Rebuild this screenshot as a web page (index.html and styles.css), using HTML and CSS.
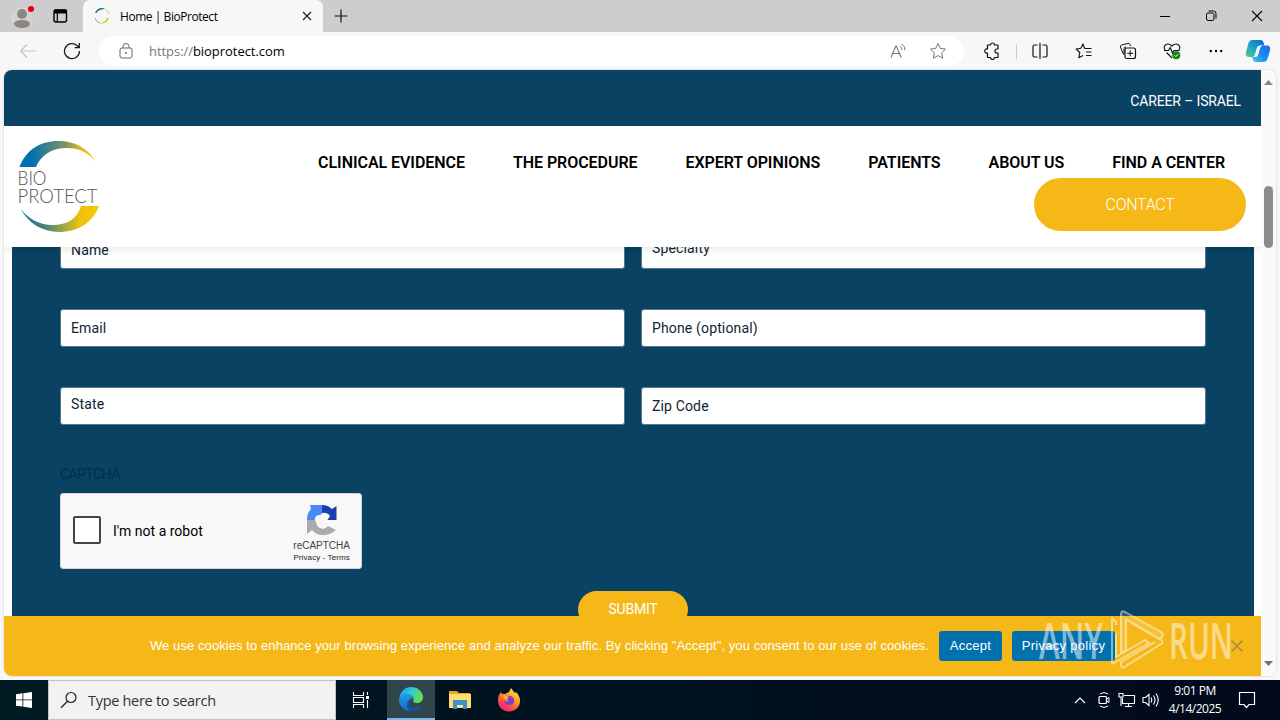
FILE: index.html
```
<!DOCTYPE html>
<html lang="en">
  <head>
    <meta charset="UTF-8" />
    <meta name="viewport" content="width=device-width, initial-scale=1.0" />
    <title>Home | BioProtect</title>
    <link rel="stylesheet" href="styles.css">
  </head>
  <body>
    <!-- Browser tabs -->
    <div class="tab-bar">
      <div class="tab-tools">
        <svg width="24" height="30" viewBox="0 0 24 30"><circle cx="12" cy="17" r="11" fill="#d6d3d0"/><circle cx="12" cy="13" r="5" fill="#8b8785"/><path d="M4 23c0-3 4-4 8-4s8 1 8 4c-1 3-4 4-8 4s-7-1-8-4z" fill="#8b8785"/><circle cx="21" cy="8" r="3.1" fill="#e60012"/></svg>
        <svg width="16" height="16" viewBox="0 0 16 16"><rect x="2" y="2" width="12.5" height="12" rx="2" fill="none" stroke="#000" stroke-width="1.4"/><path d="M2 3.5h12.5M3 2v3h11V2zM5.3 5v9" fill="#000" stroke="#000" stroke-width="1.2"/></svg>
      </div>
      <div class="tab">
        <svg width="16" height="16" viewBox="0 0 16 16"><path d="M1 5C3 0 8-1 11 1 7 1 4 2 2.500 5z" fill="#17667e"/><path d="M11 1q3 1.500 4 5" fill="none" stroke="#d8cd6c"/><path d="M1 10q1 4 5 5" fill="none" stroke="#7fae9c"/><path d="M15 10c-2 5-6 6.500-10 5 4 0 7-2 8-5z" fill="#d9c51f"/></svg>
        <span class="tab-title">Home | BioProtect</span>
        <svg width="10" height="10" viewBox="0 0 10 10"><path d="M1 1l8 8M9 1L1 9" stroke="#222" stroke-width="1.2"/></svg>
      </div>
      <svg class="new-tab" width="14" height="14" viewBox="0 0 14 14"><path d="M7 .5v13M.5 7h13" stroke="#111" stroke-width="1.2"/></svg>
      <div class="window-btns">
        <svg width="12" height="12" viewBox="0 0 12 12"><path d="M1 6.500h10" stroke="#000"/></svg>
        <svg width="12" height="12" viewBox="0 0 12 12"><rect x="1.500" y="3" width="7.500" height="7.500" rx="1.500" fill="none" stroke="#000"/><path d="M3.500 1h5q2.500 0 2.500 2.500v5" fill="none" stroke="#000"/></svg>
        <svg width="12" height="12" viewBox="0 0 12 12"><path d="M1 1l10 10M11 1L1 11" stroke="#000" stroke-width="1.100"/></svg>
      </div>
    </div>

    <!-- Address bar -->
    <div class="toolbar">
      <svg class="back" width="18" height="16" viewBox="0 0 18 16"><path d="M17 8H2M8 1.500L1.500 8 8 14.500" fill="none" stroke="#c4c4c4" stroke-width="1.200"/></svg>
      <svg class="reload" width="18" height="18" viewBox="0 0 18 18"><path d="M16.500 9A7.500 7.500 0 1 1 14 3.500L16 5.500M16.300 1v4.700h-4.700" fill="none" stroke="#1b1b1b" stroke-width="1.300"/></svg>
      <div class="address">
        <svg width="14" height="16" viewBox="0 0 14 16"><rect x="1" y="5" width="12" height="10" rx="2" fill="none" stroke="#666"/><path d="M4 5V3.500a3 3 0 0 1 6 0V5" fill="none" stroke="#666"/><circle cx="7" cy="10" r="1" fill="#666"/></svg>
        <span class="url"><span>https://</span>bioprotect.com</span>
        <svg width="17" height="16" viewBox="0 0 17 16"><path d="M1 14.500L5.800 3h.6l4.800 11.500M2.800 10.500h6.600" fill="none" stroke="#777" stroke-width="1.100"/><path d="M10 3q2 1.500 2 4M11.500 .8q3.500 2.200 3.500 6.500" fill="none" stroke="#777"/></svg>
        <svg class="star" width="18" height="18" viewBox="0 0 18 18"><path d="M9 1.500l2.300 4.900 5.200.7-3.800 3.700.9 5.400L9 13.600l-4.600 2.600.9-5.400L1.500 7.100l5.200-.7z" fill="none" stroke="#777" stroke-linejoin="round"/></svg>
      </div>
      <div class="toolbar-icons">
        <svg width="18" height="18" viewBox="0 0 18 18"><path d="M4.500 3h3a2 2 0 0 1 4 0H15v4h-1a2 2 0 0 0 0 4h1v4.500h-3.500a2 2 0 0 1-4 0h-3V11a2.100 2.100 0 1 1 0-4z" fill="none" stroke="#111" stroke-width="1.200" stroke-linejoin="round"/></svg>
        <span class="divider"></span>
        <svg width="18" height="18" viewBox="0 0 18 18"><path d="M6.500 3H3.500Q2 3 2 4.500v9Q2 15 3.500 15h3M11.500 3h3q1.500 0 1.500 1.500v9q0 1.500-1.500 1.500h-3M9 1v16" fill="none" stroke="#111" stroke-width="1.200"/></svg>
        <svg width="18" height="18" viewBox="0 0 18 18"><path d="M9.500 6.200L8 2 5.900 6.300l-4.700.7 3.600 3.500-1 5.200L8 13.500M8.800 4.500L10 6.500h6.500M11 10h5.500M11 13.500h5.500" fill="none" stroke="#111" stroke-width="1.100" stroke-linejoin="round"/></svg>
        <svg width="18" height="18" viewBox="0 0 18 18"><rect x="6" y="6" width="10.500" height="10.500" rx="2" fill="none" stroke="#111" stroke-width="1.200"/><path d="M11.200 8.300v6M8.200 11.300h6M4.500 12.500L1.500 5Q1 3.500 2.500 3l6.500-1.500q1.500-.3 2 1.200l.5 1.500M5 12.500V6.500Q5 5 7 5" fill="none" stroke="#111"/></svg>
        <svg width="18" height="18" viewBox="0 0 18 18"><path d="M2 8C0 5 2 2 5 2c2 0 3 1 4 2.200C10 3 11 2 13 2c3 0 5 3 3 6M3.500 10.500L9 16M1 8.500h4.500L7.200 5.500l2.300 5.500 1.500-2.500h5.500" fill="none" stroke="#111" stroke-width="1.100"/><circle cx="13.300" cy="13.300" r="4" fill="#13851b"/><path d="M11.600 13.300l1.200 1.200 2.300-2.300" fill="none" stroke="#fff"/></svg>
        <svg width="18" height="18" viewBox="0 0 18 18"><circle cx="3.800" cy="9" r="1.200"/><circle cx="9" cy="9" r="1.200"/><circle cx="14.200" cy="9" r="1.200"/></svg>
      </div>
      <svg class="copilot" width="26" height="24" viewBox="0 0 26 24">
        <defs>
          <linearGradient id="cp-a" x1="0" y1="1" x2="1" y2="0"><stop offset="0" stop-color="#56cf7d"/><stop offset=".45" stop-color="#1ca5c9"/><stop offset="1" stop-color="#1261cf"/></linearGradient>
          <linearGradient id="cp-b" x1="0" y1="1" x2="1" y2="0"><stop offset="0" stop-color="#45c8f4"/><stop offset=".5" stop-color="#168af2"/><stop offset="1" stop-color="#2168e0"/></linearGradient>
        </defs>
        <path d="M7.500 1h8q2.500 0 3.200 3l.6 2.500h-2.500q-2.500 0-3.300 3l-2 6.500q-.8 2-3 2H4q-4 0-3-5L3.500 4Q4.500 1 7.500 1z" fill="url(#cp-a)"/>
        <path d="M17.500 6.500H22q4 0 3 5l-2.500 8q-1 3.500-4 3.500H11q-2.500 0-3.200-3L7.200 18h2.300q2.500 0 3.300-3l2.200-6.500q.6-2 2.500-2z" fill="url(#cp-b)"/>
        <path d="M15.500 6.500h-1q-2 0-2.700 2.500L10 15q-.6 2.500-2 3h2.500q2 0 2.700-2.500L15 9.500q.5-2.500 2.500-3z" fill="#f6f6f6"/>
      </svg>
    </div>

    <div class="browser-view">
      <div class="page">
        <div class="top-bar"><a>CAREER – ISRAEL</a></div>

        <header class="site-header">
          <svg class="logo" width="84" height="94" viewBox="0 0 84 94">
            <defs>
              <linearGradient id="arc-top"><stop offset=".15" stop-color="#006fb2"/><stop offset=".6" stop-color="#7d9660"/><stop offset=".8" stop-color="#d5bd20"/><stop offset="1" stop-color="#f0cd20"/></linearGradient>
              <linearGradient id="arc-bottom"><stop offset="0" stop-color="#1874a0"/><stop offset=".3" stop-color="#49807a"/><stop offset=".55" stop-color="#9baa42"/><stop offset=".75" stop-color="#ecc010"/><stop offset="1" stop-color="#ffc800"/></linearGradient>
            </defs>
            <path d="M3.500 28C10 11 24 2 42 2c17 0 30 7 38 21C72 13 62 9 51 9 36 9 25 16 20 28z" fill="url(#arc-top)"/>
            <path d="M4 69c8 11 20 17 33 17 14 0 24-6 28-19h18C77 84 61 93 43 93 26 93 12 84 4 69z" fill="url(#arc-bottom)"/>
            <text x="1.500" y="45.500" textLength="29" lengthAdjust="spacingAndGlyphs">BIO</text>
            <text x="1.500" y="63.500" textLength="80" lengthAdjust="spacingAndGlyphs">PROTECT</text>
          </svg>
          <nav class="main-nav">
            <a>CLINICAL EVIDENCE</a>
            <a>THE PROCEDURE</a>
            <a>EXPERT OPINIONS</a>
            <a>PATIENTS</a>
            <a>ABOUT US</a>
            <a>FIND A CENTER</a>
            <a class="contact-btn">CONTACT</a>
          </nav>
        </header>

        <main class="form-section">
          <form class="contact-form">
            <div class="field field-name">Name</div>
            <div class="field field-specialty">Specialty</div>
            <div class="field">Email</div>
            <div class="field">Phone (optional)</div>
            <div class="field field-state">State</div>
            <div class="field">Zip Code</div>
          </form>
          <div class="captcha-label">CAPTCHA</div>
          <div class="captcha">
            <span class="checkbox"></span>
            <span class="captcha-text">I'm not a robot</span>
            <div class="captcha-brand">
              <svg width="32" height="32" viewBox="0 0 32 32">
                <path d="M16 1v9q-4 1-4.500 6H1Q1 9 5 5L4 1z" fill="#4a8af4"/>
                <path d="M16 1q6 0 10 4l4.500-3v14H21l3-4q-3-4-8-3z" fill="#1c3fb0"/>
                <path d="M1 16h9q0 6 4 8 5 2 8-2l8 4q-5 5-14 5-6 0-10-5l-5 4z" fill="#ababab"/>
                <path d="M9 14q1-3 4-3 3 0 3 3 1-4 5-4 4 2 1 5-2 2 0 5-2 5-7 4-5-1-4-6-3-1-2-4z" fill="#f8f8f8"/>
              </svg>
              <span class="brand-name">reCAPTCHA</span>
              <span class="brand-links">Privacy - Terms</span>
            </div>
          </div>
          <div class="submit-btn">SUBMIT</div>
        </main>

        <div class="cookie-bar">
          <span class="cookie-text">We use cookies to enhance your browsing experience and analyze our traffic. By clicking "Accept", you consent to our use of cookies.</span>
          <a class="cookie-btn accept">Accept</a>
          <a class="cookie-btn policy">Privacy policy</a>
          <svg class="cookie-close" width="12" height="12" viewBox="0 0 12 12"><path d="M.5.5l11 11M11.500.5l-11 11" stroke="#a58a3c" stroke-width="1.500"/></svg>
        </div>
      </div>
      <div class="scrollbar">
        <svg width="9" height="5" viewBox="0 0 9 5"><path d="M0 5L4.500 0 9 5z" fill="#858585"/></svg>
        <span class="thumb"></span>
        <svg width="9" height="5" viewBox="0 0 9 5"><path d="M0 0l4.500 5L9 0z" fill="#707070"/></svg>
      </div>
    </div>

    <!-- Windows taskbar -->
    <div class="taskbar">
      <div class="start">
        <svg width="16" height="16" viewBox="0 0 16 16"><path d="M0 2.300L6.500 1.300v6.200H0zM7.300 1.200L16 0v7.500H7.300zM0 8.300h6.500v6.300L0 13.700zM7.300 8.300H16V16l-8.700-1.300z" fill="#fff"/></svg>
      </div>
      <div class="search">
        <svg width="18" height="18" viewBox="0 0 18 18"><circle cx="11" cy="6.500" r="5" fill="none" stroke="#222" stroke-width="1.200"/><path d="M7.500 10.200L1 16.700" stroke="#222" stroke-width="1.300"/></svg>
        <span>Type here to search</span>
      </div>
      <div class="task">
        <svg width="18" height="16" viewBox="0 0 18 16"><path d="M1.500 0v3.500h10V0M1.500 16v-3.500h10V16M1.500 5.500h10v5h-10zM15.500 0v3M15.500 8v8" fill="none" stroke="#fff" stroke-width="1.100"/><rect x="14" y="4" width="3" height="3" fill="#fff"/></svg>
      </div>
      <div class="task active">
        <svg width="26" height="26" viewBox="0 0 26 26">
          <defs>
            <linearGradient id="edge-a" x1="0" y1="0" x2="1" y2=".4"><stop offset="0" stop-color="#1c9de0"/><stop offset=".5" stop-color="#31c5dc"/><stop offset="1" stop-color="#65dd55"/></linearGradient>
            <linearGradient id="edge-b" x1="0" y1="0" x2="0" y2="1"><stop offset="0" stop-color="#1ea1e2"/><stop offset="1" stop-color="#0f6bce"/></linearGradient>
          </defs>
          <path d="M1.500 11C3 5 7 1 13 1c7 0 12 5 12 10 0 4-3 6-6 6-2 0-4-1-4-2 2-3 0-6-4-6-4-1-7 0-9.500 2z" fill="url(#edge-a)"/>
          <path d="M1 14c0-4 3-6.500 7-6.500 5 0 8 3 7.500 5.500-1-1-4-1-5 2-1 4 2 8 7 8-1.500 1.500-4 2-5 2C6 25 1 20 1 14z" fill="url(#edge-b)"/>
          <path d="M10.500 14.500c-1 4 2 7 6 7 3 0 5-1 7-2-2 4-6 5.500-10 5.500-5 0-6-7-3-10.500z" fill="#1454a0"/>
        </svg>
      </div>
      <div class="task">
        <svg width="22" height="20" viewBox="0 0 22 20"><path d="M0 1h8l2 2h11v15H0z" fill="#e9a520"/><path d="M0 4h22v14H0z" fill="#fddc70"/><path d="M4 10h14v9h-4v-4H8v4H4z" fill="#3d90cf"/><path d="M8 15h6v2H8z" fill="#f6e7a6"/></svg>
      </div>
      <div class="task">
        <svg width="24" height="24" viewBox="0 0 24 24">
          <defs><linearGradient id="fox" x1=".8" y1="0" x2=".2" y2="1"><stop offset="0" stop-color="#fff04a"/><stop offset=".4" stop-color="#ff9c1f"/><stop offset=".75" stop-color="#ff3f4e"/><stop offset="1" stop-color="#e81e8b"/></linearGradient></defs>
          <path d="M2 7l2-3 1 2 3 0 4-2 2-4q2 3 4 5l1-1q4 4 4 9c0 6-5 10.500-11 10.500S1 19 1 13q0-4 1-6z" fill="url(#fox)"/>
          <path d="M7 10q2-3 7-2 4 2 3 6-2 4-6 3-4-1-4-4l3 1 2-2z" fill="#7b3fd0"/><path d="M6 9q3-2 6 0l-3 3z" fill="#ffb132"/>
        </svg>
      </div>
      <div class="tray">
        <svg width="12" height="8" viewBox="0 0 12 8"><path d="M1 7l5-5 5 5" fill="none" stroke="#fff" stroke-width="1.200"/></svg>
        <svg width="14" height="18" viewBox="0 0 14 18"><path d="M3 3q4-3 8 0M3 15q4 3 8 0M9.500 8l2.500-1.500v5L9.500 10" fill="none" stroke="#fff"/><rect x="2" y="5.500" width="7.500" height="7" rx="1" fill="none" stroke="#fff" stroke-width="1.200"/></svg>
        <svg width="18" height="16" viewBox="0 0 18 16"><path d="M6 3.500h10.500v8H4.500V6M7 14.500h7M10.500 11.500v3M1 1.500h4V5H1zM3 5v9" fill="none" stroke="#fff" stroke-width="1.100"/></svg>
        <svg width="18" height="16" viewBox="0 0 18 16"><path d="M1 5.500h2.500L7 2.500v11l-3.500-3H1zM9 5.500q1.500 2.500 0 5M11.500 3.500q3 4.500 0 9M14 1.500q4.500 6.500 0 13" fill="none" stroke="#fff" stroke-width="1.100"/></svg>
      </div>
      <div class="clock"><span>9:01 PM</span><span>4/14/2025</span></div>
      <svg class="notify" width="18" height="18" viewBox="0 0 18 18"><path d="M1.500 1.500h15v12H11L8.500 16.500 6 13.500H1.500z" fill="none" stroke="#fff" stroke-width="1.200"/></svg>
    </div>

    <svg class="watermark" width="200" height="68" viewBox="0 0 200 68">
      <text x="1" y="53" textLength="64" lengthAdjust="spacingAndGlyphs">ANY</text>
      <path d="M83 8q0-4 4-2l36 20q3 2 1 5l-2 2-34-20v31l-5 3z" />
      <path d="M78 19v-3l-4-4v46l37-21-4-3-29 17V27" />
      <path d="M93 17l30 17q3 2 0 4L88 60q-3 3-5 0v-4l34-20" />
      <text x="131" y="53" textLength="64" lengthAdjust="spacingAndGlyphs">RUN</text>
    </svg>
  </body>
</html>
```
FILE: styles.css
```
*,
*::before,
*::after {
  margin: 0;
  padding: 0;
  box-sizing: border-box;
}

:root {
  --blue: #094263;
  --yellow: #f6b818;
  --link-blue: #0071ad;
  --chrome: #f7f7f7;
  --ui-font: "Open Sans", "Noto Sans", sans-serif;
  --site-font: Roboto, "Noto Sans", sans-serif;
}

body {
  position: relative;
  display: flex;
  flex-direction: column;
  width: 1280px;
  height: 720px;
  overflow: hidden;
  background: var(--chrome);
  font-family: var(--ui-font);
  white-space: nowrap;
}

svg {
  display: block;
  flex: none;
}

/* Browser tabs */
.tab-bar {
  display: flex;
  align-items: center;
  height: 32px;
  background: #cdcdcd;
}

.tab-tools {
  display: flex;
  align-items: center;
  gap: 18px;
  width: 83px;
  height: 32px;
  padding-left: 10px;
}

.tab {
  display: flex;
  align-items: center;
  width: 240px;
  height: 32px;
  padding: 0 11px;
  border-radius: 7px 7px 0 0;
  background: var(--chrome);
}

.tab-title {
  flex: 1;
  margin-left: 10px;
  font-size: 12px;
  letter-spacing: -0.45px;
}

.new-tab {
  margin-left: 11px;
}

.window-btns {
  display: flex;
  gap: 34px;
  margin-left: auto;
  padding-right: 17px;
}

/* Address bar */
.toolbar {
  display: flex;
  align-items: center;
  height: 38px;
  padding-left: 19px;
}

.reload {
  margin-left: 26px;
}

.address {
  display: flex;
  align-items: center;
  width: 865px;
  height: 30px;
  margin-left: 18px;
  padding: 0 17px 0 20px;
  border-radius: 15px;
  background: #fff;
}

.url {
  flex: 1;
  margin-left: 16px;
  font-size: 13px;
  letter-spacing: -0.05px;
}

.url span {
  color: #777;
}

.star {
  margin-left: 22px;
}

.toolbar-icons {
  display: flex;
  align-items: center;
  gap: 26px;
  margin-left: 19px;
}

.divider {
  width: 1px;
  height: 15px;
  margin: 0 -12px 0 -11px;
  background: #ccc;
}

.copilot {
  margin-left: 20px;
}

/* Page area */
.browser-view {
  display: flex;
  height: 606px;
  margin: 0 4px 4px;
  border-radius: 8px;
  overflow: hidden;
  background: #fff;
  box-shadow: 0 0 2px #bbb;
}

.page {
  display: flex;
  flex-direction: column;
  width: 1257px;
  font-family: var(--site-font);
}

.top-bar {
  height: 56px;
  padding: 22px 20px 0 0;
  background: var(--blue);
  color: #fff;
  font-size: 14px;
  line-height: 18px;
  letter-spacing: -0.15px;
  text-align: right;
}

.site-header {
  z-index: 1;
  display: flex;
  justify-content: space-between;
  height: 121px;
  padding: 13px 15px 0 12px;
  background: #fff;
  box-shadow: 0 0 10px rgba(0, 0, 0, 0.15);
  clip-path: inset(0 0 -10px 0);
}

.logo text {
  fill: #555;
  font-family: Lato, sans-serif;
  font-size: 20px;
  font-weight: 300;
}

.main-nav {
  display: flex;
  flex-wrap: wrap;
  justify-content: flex-end;
  align-content: flex-start;
  column-gap: 48px;
  width: 960px;
  padding-top: 13px;
  color: #000;
  font-size: 16px;
  font-weight: 600;
  line-height: 22px;
  letter-spacing: -0.05px;
}

.main-nav a:nth-child(6) {
  margin-right: 21px;
}

.main-nav .contact-btn {
  width: 212px;
  height: 53px;
  margin-top: 4px;
  border-radius: 27px;
  background: var(--yellow);
  color: #fff;
  font-weight: 300;
  line-height: 53px;
  letter-spacing: -0.3px;
  text-align: center;
}

.form-section {
  height: 369px;
  margin: 0 7px 0 8px;
  padding: 0 48px;
  overflow: hidden;
  background: var(--blue);
}

.contact-form {
  display: grid;
  grid-template-columns: 565px 565px;
  gap: 40px 16px;
  margin-top: -16px;
}

.field {
  height: 38px;
  padding-left: 10px;
  border: 1px solid #57788c;
  border-radius: 3px;
  background: #fff;
  color: #0d2434;
  font-size: 14px;
  line-height: 36px;
  letter-spacing: 0.15px;
}

.field-name {
  line-height: 37px;
}

.field-specialty,
.field-state {
  line-height: 33px;
}

.captcha-label {
  margin-top: 39px;
  color: #062d4b;
  font-size: 14px;
  line-height: 20px;
  letter-spacing: -0.5px;
}

.captcha {
  display: flex;
  align-items: center;
  width: 302px;
  height: 76px;
  margin-top: 9px;
  padding: 0 11px 0 13px;
  border: 1px solid #d3d3d3;
  border-radius: 3px;
  background: #f8f8f8;
}

.checkbox {
  width: 28px;
  height: 28px;
  margin: 0 0 2px -1px;
  border: 2px solid #444;
  border-radius: 2px;
  background: #fff;
}

.captcha-text {
  flex: 1;
  margin-left: 12px;
  font-size: 14px;
}

.captcha-brand {
  display: flex;
  flex-direction: column;
  align-items: center;
  padding-top: 6px;
  color: #444;
  font-family: "Liberation Sans", Arial, sans-serif;
}

.brand-name {
  margin-top: 3px;
  font-size: 10px;
  line-height: 13px;
}

.brand-links {
  color: #222;
  font-size: 8px;
  line-height: 12px;
  letter-spacing: 0.1px;
}

.submit-btn {
  width: 110px;
  height: 37px;
  margin: 22px auto 0;
  border-radius: 19px;
  background: var(--yellow);
  color: #fff;
  font-size: 14px;
  line-height: 37px;
  letter-spacing: -0.2px;
  text-align: center;
}

.cookie-bar {
  display: flex;
  align-items: center;
  height: 60px;
  padding: 0 18px 0 146px;
  background: var(--yellow);
  color: #fff;
  font-family: "Liberation Sans", Arial, sans-serif;
  font-size: 13px;
}

.cookie-text {
  width: 779px;
  padding-bottom: 1px;
  letter-spacing: 0.08px;
}

.cookie-btn {
  height: 30px;
  margin-left: 10px;
  border-radius: 3px;
  background: var(--link-blue);
  line-height: 30px;
  letter-spacing: 0.3px;
  text-align: center;
}

.accept {
  width: 63px;
}

.policy {
  width: 103px;
}

.cookie-close {
  margin-left: auto;
}

.scrollbar {
  display: flex;
  flex-direction: column;
  align-items: center;
  width: 15px;
  padding: 10px 0;
  background: #fafafa;
}

.thumb {
  width: 9px;
  height: 62px;
  margin: 101px 0 auto;
  border-radius: 5px;
  background: #8b8b8b;
}

/* Taskbar */
.taskbar {
  display: flex;
  align-items: center;
  height: 40px;
  background: linear-gradient(90deg, #001a22, #00121f 45%, #020a1b);
}

.start,
.task {
  display: flex;
  align-items: center;
  justify-content: center;
  width: 49px;
  height: 40px;
}

.start {
  width: 48px;
}

.search {
  display: flex;
  align-items: center;
  gap: 10px;
  width: 288px;
  height: 40px;
  padding-left: 11px;
  border: 1px solid #c3c3c3;
  background: #f2f2f2;
  color: #333;
  font-size: 14.5px;
  letter-spacing: -0.3px;
}

.active {
  width: 48px;
  margin-left: 2px;
  border-bottom: 2px solid #76b9ed;
  background: #30454c;
}

.tray {
  display: flex;
  align-items: center;
  gap: 6px;
  margin-left: auto;
}

.tray svg:nth-child(2) {
  margin: 0 1px 0 5px;
}

.clock {
  display: flex;
  flex-direction: column;
  align-items: center;
  width: 60px;
  margin-left: 5px;
  color: #fff;
  font-size: 12px;
  line-height: 18px;
  letter-spacing: -0.5px;
}

.notify {
  margin: 0 24px 0 13px;
}

/* Translucent overlay mark */
.watermark {
  position: absolute;
  left: 1038px;
  top: 606px;
  opacity: 0.5;
}

.watermark text {
  fill: #fff;
  font-family: "Open Sans", sans-serif;
  font-size: 50px;
  font-weight: 600;
}

.watermark path {
  fill: rgba(255, 255, 255, 0.3);
  fill-rule: evenodd;
  stroke: #fff;
  stroke-width: 2;
  stroke-linejoin: round;
}

.watermark path:nth-of-type(n + 2) {
  fill: none;
}
```
